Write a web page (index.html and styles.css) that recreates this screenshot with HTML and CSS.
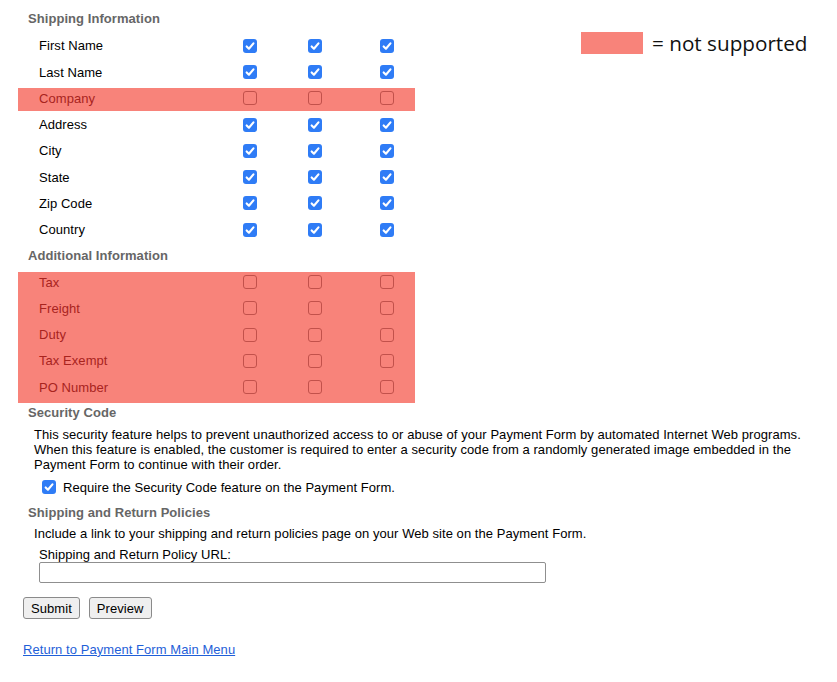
FILE: index.html
```html
<!DOCTYPE html>
<html>
<head>
<meta charset="utf-8">
<link rel="stylesheet" href="styles.css">
</head>
<body>
<div class="page">
  <div class="top">
    <div class="fields">
      <div class="sec-head">Shipping Information</div>
      <div class="row"><span class="label">First Name</span><span class="cb on"><svg viewBox="0 0 13 13"><path d="M3.4 6.9 L5.5 9 L9.7 4.1"/></svg></span><span class="cb on"><svg viewBox="0 0 13 13"><path d="M3.4 6.9 L5.5 9 L9.7 4.1"/></svg></span><span class="cb on"><svg viewBox="0 0 13 13"><path d="M3.4 6.9 L5.5 9 L9.7 4.1"/></svg></span></div>
      <div class="row"><span class="label">Last Name</span><span class="cb on"><svg viewBox="0 0 13 13"><path d="M3.4 6.9 L5.5 9 L9.7 4.1"/></svg></span><span class="cb on"><svg viewBox="0 0 13 13"><path d="M3.4 6.9 L5.5 9 L9.7 4.1"/></svg></span><span class="cb on"><svg viewBox="0 0 13 13"><path d="M3.4 6.9 L5.5 9 L9.7 4.1"/></svg></span></div>
      <div class="row off"><span class="label">Company</span><span class="cb"></span><span class="cb"></span><span class="cb"></span></div>
      <div class="row"><span class="label">Address</span><span class="cb on"><svg viewBox="0 0 13 13"><path d="M3.4 6.9 L5.5 9 L9.7 4.1"/></svg></span><span class="cb on"><svg viewBox="0 0 13 13"><path d="M3.4 6.9 L5.5 9 L9.7 4.1"/></svg></span><span class="cb on"><svg viewBox="0 0 13 13"><path d="M3.4 6.9 L5.5 9 L9.7 4.1"/></svg></span></div>
      <div class="row"><span class="label">City</span><span class="cb on"><svg viewBox="0 0 13 13"><path d="M3.4 6.9 L5.5 9 L9.7 4.1"/></svg></span><span class="cb on"><svg viewBox="0 0 13 13"><path d="M3.4 6.9 L5.5 9 L9.7 4.1"/></svg></span><span class="cb on"><svg viewBox="0 0 13 13"><path d="M3.4 6.9 L5.5 9 L9.7 4.1"/></svg></span></div>
      <div class="row"><span class="label">State</span><span class="cb on"><svg viewBox="0 0 13 13"><path d="M3.4 6.9 L5.5 9 L9.7 4.1"/></svg></span><span class="cb on"><svg viewBox="0 0 13 13"><path d="M3.4 6.9 L5.5 9 L9.7 4.1"/></svg></span><span class="cb on"><svg viewBox="0 0 13 13"><path d="M3.4 6.9 L5.5 9 L9.7 4.1"/></svg></span></div>
      <div class="row"><span class="label">Zip Code</span><span class="cb on"><svg viewBox="0 0 13 13"><path d="M3.4 6.9 L5.5 9 L9.7 4.1"/></svg></span><span class="cb on"><svg viewBox="0 0 13 13"><path d="M3.4 6.9 L5.5 9 L9.7 4.1"/></svg></span><span class="cb on"><svg viewBox="0 0 13 13"><path d="M3.4 6.9 L5.5 9 L9.7 4.1"/></svg></span></div>
      <div class="row"><span class="label">Country</span><span class="cb on"><svg viewBox="0 0 13 13"><path d="M3.4 6.9 L5.5 9 L9.7 4.1"/></svg></span><span class="cb on"><svg viewBox="0 0 13 13"><path d="M3.4 6.9 L5.5 9 L9.7 4.1"/></svg></span><span class="cb on"><svg viewBox="0 0 13 13"><path d="M3.4 6.9 L5.5 9 L9.7 4.1"/></svg></span></div>
      <div class="sec-head">Additional Information</div>
      <div class="group">
        <div class="row"><span class="label">Tax</span><span class="cb"></span><span class="cb"></span><span class="cb"></span></div>
        <div class="row"><span class="label">Freight</span><span class="cb"></span><span class="cb"></span><span class="cb"></span></div>
        <div class="row"><span class="label">Duty</span><span class="cb"></span><span class="cb"></span><span class="cb"></span></div>
        <div class="row"><span class="label">Tax Exempt</span><span class="cb"></span><span class="cb"></span><span class="cb"></span></div>
        <div class="row"><span class="label">PO Number</span><span class="cb"></span><span class="cb"></span><span class="cb"></span></div>
      </div>
    </div>
    <div class="legend"><span class="swatch"></span><span class="legend-text">= not supported</span></div>
  </div>

  <div class="sec-head">Security Code</div>
  <p class="desc">This security feature helps to prevent unauthorized access to or abuse of your Payment Form by automated Internet Web programs. When this feature is enabled, the customer is required to enter a security code from a randomly generated image embedded in the Payment Form to continue with their order.</p>
  <div class="require"><span class="cb on"><svg viewBox="0 0 13 13"><path d="M3.4 6.9 L5.5 9 L9.7 4.1"/></svg></span><span>Require the Security Code feature on the Payment Form.</span></div>

  <div class="sec-head sec-head-2">Shipping and Return Policies</div>
  <p class="desc desc-2">Include a link to your shipping and return policies page on your Web site on the Payment Form.</p>
  <div class="url-label">Shipping and Return Policy URL:</div>
  <input class="url-input" type="text">
  <div class="buttons"><button class="btn">Submit</button><button class="btn">Preview</button></div>
  <a class="back-link" href="#">Return to Payment Form Main Menu</a>
</div>
</body>
</html>
```

FILE: styles.css
```css
html, body {
  margin: 0;
  padding: 0;
  background: #ffffff;
}

body {
  font-family: "Liberation Sans", Arial, sans-serif;
  font-size: 13px;
  letter-spacing: 0.06px;
  color: #000;
}

.page {
  padding-top: 6.4px;
}

.top {
  display: flex;
  align-items: flex-start;
}

.fields {
  width: 415px;
}

.sec-head {
  height: 26.25px;
  line-height: 26.25px;
  padding-left: 28px;
  font-weight: bold;
  color: #666666;
}

.row {
  margin-left: 18px;
  width: 397px;
  height: 26.25px;
  display: grid;
  grid-template-columns: 225px 64.5px 72.5px 35px;
  align-items: center;
}

.label {
  padding-left: 21px;
}

.row.off {
  background: linear-gradient(#f8837a, #f8837a) 0 3px / 100% 100% no-repeat;
  color: #a8241e;
}

.group {
  margin-left: 18px;
  width: 397px;
  padding-bottom: 3px;
  margin-bottom: -3px;
  background: linear-gradient(#f8837a, #f8837a) 0 3px / 100% 100% no-repeat;
  color: #a8241e;
}

.group .row {
  margin-left: 0;
}

.cb {
  width: 14px;
  height: 14px;
  box-sizing: border-box;
  border: 1px solid #c2514b;
  border-radius: 3px;
  display: block;
}

.cb.on {
  border: none;
  background: #2f7cf6;
}

.cb svg {
  display: block;
  width: 14px;
  height: 14px;
}

.cb svg path {
  fill: none;
  stroke: #ffffff;
  stroke-width: 2;
  stroke-linecap: round;
  stroke-linejoin: round;
}

.legend {
  margin-left: 166px;
  margin-top: 25.6px;
  display: flex;
  align-items: center;
  gap: 9px;
}

.swatch {
  width: 62px;
  height: 22px;
  background: #f8837a;
}

.legend-text {
  font-family: "Open Sans", "Noto Sans", sans-serif;
  font-size: 20.7px;
  letter-spacing: 0;
  line-height: 22px;
  color: #111;
}

.desc {
  margin: 1px 0 0 0;
  padding-left: 34px;
  width: 790px;
  line-height: 15px;
}

.require {
  margin-top: 4px;
  margin-left: 42px;
  height: 22px;
  display: flex;
  align-items: center;
  gap: 7px;
}

.sec-head-2 {
  margin-top: 1.6px;
}

.desc-2 {
  margin-top: 0;
}

.url-label {
  margin-top: 6px;
  padding-left: 39px;
  line-height: 15px;
}

.url-input {
  display: block;
  margin: 0 0 0 39px;
  width: 507px;
  height: 21px;
  box-sizing: border-box;
  border: 1px solid #8f8f8f;
  border-radius: 2px;
  padding: 1px 3px;
  font: inherit;
}

.buttons {
  margin-top: 14px;
  margin-left: 23px;
  display: flex;
  gap: 9px;
}

.btn {
  height: 22px;
  box-sizing: border-box;
  padding: 0 7px;
  font-family: "Liberation Sans", Arial, sans-serif;
  font-size: 13px;
  letter-spacing: 0.06px;
  color: #000;
  background: #efefef;
  border: 1px solid #8a8a8a;
  border-radius: 3px;
}

.back-link {
  display: inline-block;
  margin-top: 22.5px;
  margin-left: 23px;
  line-height: 15px;
  color: #1f5fd8;
  text-decoration: underline;
}
```
